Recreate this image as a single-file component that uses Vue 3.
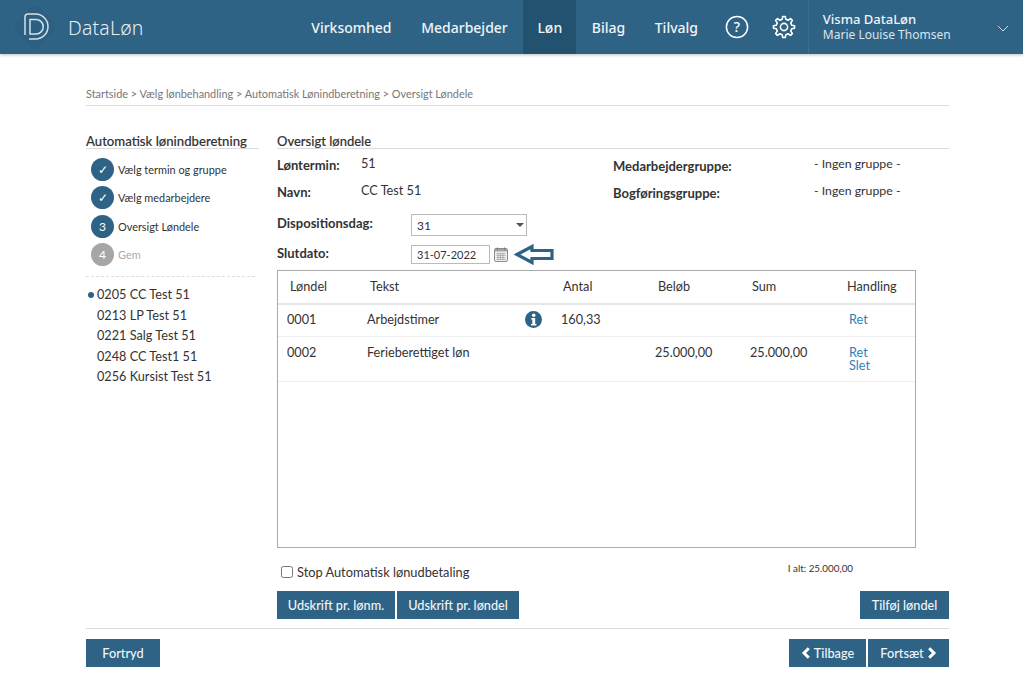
<script setup>
const nav = ['Virksomhed', 'Medarbejder', 'Løn', 'Bilag', 'Tilvalg']
const steps = [
  { mark: '✓', label: 'Vælg termin og gruppe', state: 'done' },
  { mark: '✓', label: 'Vælg medarbejdere', state: 'done' },
  { mark: '3', label: 'Oversigt Løndele', state: 'done' },
  { mark: '4', label: 'Gem', state: 'off' }
]
const employees = ['0205 CC Test 51', '0213 LP Test 51', '0221 Salg Test 51', '0248 CC Test1 51', '0256 Kursist Test 51']

// Eight-tooth cog outline for the settings icon
const gearPath = (() => {
  const pts = []
  const teeth = 8
  for (let i = 0; i < teeth; i++) {
    const a = (i / teeth) * Math.PI * 2
    const s = (Math.PI * 2) / teeth
    const add = (r, off) => {
      const t = a + off * s
      pts.push(`${(12 + r * Math.cos(t)).toFixed(2)} ${(12 + r * Math.sin(t)).toFixed(2)}`)
    }
    add(7.9, -0.3)
    add(10.6, -0.15)
    add(10.6, 0.15)
    add(7.9, 0.3)
  }
  return 'M' + pts.join('L') + 'Z'
})()
</script>

<template>
  <div class="page">
    <header class="top">
      <div class="brand">
        <svg class="logo" width="46" height="50" viewBox="0 0 46 50" fill="none">
          <path d="M20 2.5Q23 0.5 26 2.5L42.5 20Q46 25 42.5 30L26 47.5Q23 49.5 20 47.5L3.5 30Q0 25 3.5 20Z" fill="#2c5f81" stroke="#34698c" stroke-width="0.8"/>
          <path d="M13 33V15Q13 12 16 12H23.5A12.5 12.5 0 0 1 23.5 37H17" stroke="#d5e1e9" stroke-width="1.5"/>
          <path d="M18 17.5V32H24A7.25 7.25 0 0 0 24 17.5Z" stroke="#d5e1e9" stroke-width="1.5"/>
        </svg>
        <span class="brand-name">DataLøn</span>
      </div>
      <nav class="nav">
        <a v-for="item in nav" :key="item" class="nav-item" :class="{ active: item === 'Løn' }">{{ item }}</a>
      </nav>
      <svg class="help" width="24" height="24" viewBox="0 0 24 24" fill="none">
        <circle cx="12" cy="12" r="10.6" stroke="#fff" stroke-width="1.5"/>
        <text x="12" y="16.5" text-anchor="middle" class="help-mark">?</text>
      </svg>
      <svg class="gear" width="24" height="24" viewBox="0 0 24 24" fill="none" stroke="#fff" stroke-width="1.6" stroke-linejoin="round">
        <circle cx="12" cy="12" r="3.6"/>
        <path :d="gearPath"/>
      </svg>
      <div class="user">
        <div class="user-org">Visma DataLøn</div>
        <div class="user-name">Marie Louise Thomsen</div>
      </div>
      <svg class="chev" width="12" height="7" viewBox="0 0 12 7" fill="none">
        <path d="M1 1l5 5 5-5" stroke="#cfdde6" stroke-width="1"/>
      </svg>
    </header>

    <main class="content">
      <div class="crumbs">Startside &gt; Vælg lønbehandling &gt; Automatisk Lønindberetning &gt; Oversigt Løndele</div>

      <div class="columns">
        <aside class="side">
          <h2 class="side-title">Automatisk lønindberetning</h2>
          <ol class="steps">
            <li v-for="s in steps" :key="s.label" class="step" :class="s.state">
              <span class="bullet">{{ s.mark }}</span>
              <span>{{ s.label }}</span>
            </li>
          </ol>
          <ul class="emps">
            <li v-for="(e, i) in employees" :key="e" class="emp" :class="{ current: i === 0 }">{{ e }}</li>
          </ul>
        </aside>

        <section class="body">
          <h2 class="body-title">Oversigt løndele</h2>

          <div class="info">
            <div class="info-row">
              <b class="k1">Løntermin:</b><span class="v1">51</span>
              <b class="k2">Medarbejdergruppe:</b><span class="v2">- Ingen gruppe -</span>
            </div>
            <div class="info-row">
              <b class="k1">Navn:</b><span class="v1">CC Test 51</span>
              <b class="k2">Bogføringsgruppe:</b><span class="v2">- Ingen gruppe -</span>
            </div>
          </div>

          <div class="field field-select">
            <b class="k1">Dispositionsdag:</b>
            <div class="select">31<i class="caret"></i></div>
          </div>
          <div class="field field-date">
            <b class="k1">Slutdato:</b>
            <div class="date">31-07-2022</div>
            <svg class="cal" width="14" height="15" viewBox="0 0 14 15">
              <rect x="0.5" y="1.5" width="13" height="13" rx="1.5" fill="#efefef" stroke="#8c8c8c"/>
              <rect x="1" y="2" width="12" height="2.5" fill="#a3a3a3"/>
              <path d="M3.5 0.5v2.5M10.5 0.5v2.5" stroke="#777"/>
              <path d="M2.5 6.5h9M2.5 8.5h9M2.5 10.5h9M2.5 12.5h9M4 6v7M6.5 6v7M9 6v7" stroke="#a5a5a5" stroke-width="0.8"/>
            </svg>
            <svg class="arrow" width="40" height="21" viewBox="0 0 40 21" fill="none">
              <path d="M3 10.5 18 2.5V6.5H38V14.5H18V18.5Z" stroke="#2d6385" stroke-width="3.2"/>
            </svg>
          </div>

          <div class="table">
            <div class="thead">
              <span>Løndel</span><span>Tekst</span><span>Antal</span><span>Beløb</span><span>Sum</span><span>Handling</span>
            </div>
            <div class="trow">
              <span>0001</span><span>Arbejdstimer</span>
              <svg class="info-icon" width="17" height="17" viewBox="0 0 17 17">
                <circle cx="8.5" cy="8.5" r="8.5" fill="#2d6385"/>
                <circle cx="8.7" cy="4.2" r="1.8" fill="#fff"/>
                <path d="M6.2 7h4v6h1.2v1.6H6v-1.6h1.3V8.6H6.2z" fill="#fff"/>
              </svg>
              <span>160,33</span><span></span><span></span>
              <a class="link">Ret</a>
            </div>
            <div class="trow tall">
              <span>0002</span><span>Ferieberettiget løn</span><span></span><span></span>
              <span>25.000,00</span><span>25.000,00</span>
              <div class="links"><a class="link">Ret</a><a class="link">Slet</a></div>
            </div>
          </div>

          <div class="under">
            <label class="stop"><input type="checkbox" class="check" />Stop Automatisk lønudbetaling</label>
            <span class="total">I alt: 25.000,00</span>
          </div>

          <div class="actions">
            <button class="btn w118">Udskrift pr. lønm.</button>
            <button class="btn w122">Udskrift pr. løndel</button>
            <button class="btn w89 push">Tilføj løndel</button>
          </div>
        </section>
      </div>

      <div class="footer">
        <button class="btn w74">Fortryd</button>
        <button class="btn w77 push">
          <svg width="10" height="12" viewBox="0 0 10 12" fill="none"><path d="M7.8 1.2 3 6l4.8 4.8" stroke="#fff" stroke-width="3"/></svg>
          Tilbage
        </button>
        <button class="btn w81">
          Fortsæt
          <svg width="10" height="12" viewBox="0 0 10 12" fill="none"><path d="M2.2 1.2 7 6l-4.8 4.8" stroke="#fff" stroke-width="3"/></svg>
        </button>
      </div>
    </main>
  </div>
</template>

<style>
html, body { margin: 0; background: #fff; }
</style>

<style scoped>
.page { height: 680px; overflow: hidden; font-family: Lato, "Liberation Sans", sans-serif; color: #333; font-size: 13px; }
.top { height: 54px; background: #2e6386; display: flex; align-items: stretch; box-shadow: 0 1px 3px rgba(0,0,0,.25); color: #fff; }
.brand { display: flex; align-items: center; width: 296.5px; flex: none; padding-left: 12px; box-sizing: border-box; }
.logo { flex: none; }
.brand-name { margin-left: 10px; font: 300 19.4px "Noto Sans", sans-serif; color: #e8eff4; letter-spacing: .2px; }
.nav { display: flex; }
.nav-item { display: flex; align-items: center; padding: 0 14.8px; font: 500 14px "Noto Sans", sans-serif; color: #f0f4f7; }
.nav-item.active { background: #235270; padding: 0 14px; margin: 0 .8px; }
.help { align-self: center; margin-left: 12px; }
.help-mark { font: 500 14px "Noto Sans", sans-serif; fill: #fff; }
.gear { align-self: center; margin-left: 23px; margin-right: 12px; }
.user { border-left: 1px solid #3a6e8f; padding: 0 0 0 14px; display: flex; flex-direction: column; justify-content: center; width: 167px; flex: none; }
.user-org { font: 500 13px/15px "Noto Sans", sans-serif; color: #f0f4f7; }
.user-name { font: 400 12px/15px "Noto Sans", sans-serif; color: #dbe5ec; }
.chev { align-self: center; margin-left: 7px; margin-top: 3px; }

.content { margin: 0 74px 0 86px; padding-top: 33px; }
.crumbs { font-size: 10.9px; line-height: 13px; color: #777; padding-bottom: 5px; border-bottom: 1px solid #ddd; height: 13px; }

.columns { display: flex; margin-top: 28px; }
.side { width: 173px; flex: none; margin-right: 18px; }
.side-title, .body-title { margin: 0; font-size: 13px; line-height: 14px; font-weight: 500; color: #333; border-bottom: 1px solid #ddd; -webkit-text-stroke: .15px #333; }
.side-title { font-size: 13.15px; }
.steps { list-style: none; margin: 0; padding: 6.5px 0 0 5px; }
.step { display: flex; align-items: center; height: 28.3px; font-size: 10.9px; gap: 4px; color: #333; }
.step.off { color: #aaa; }
.bullet { width: 23px; height: 23px; border-radius: 50%; background: #2e6386; color: #fff; display: flex; align-items: center; justify-content: center; font-size: 12px; flex: none; }
.step.off .bullet { background: #a6a6a6; }
.emps { list-style: none; margin: 7.5px 4px 0 0; padding: 7px 0 0 11px; border-top: 1px dashed #ddd; }
.emp { font-size: 12.7px; line-height: 20.5px; position: relative; color: #333; }
.emp.current::before { content: ""; position: absolute; left: -9px; top: 8px; width: 6px; height: 6px; border-radius: 50%; background: #2e6386; }

.body { flex: 1; min-width: 0; }
.info { padding-top: 7px; }
.info-row { display: grid; grid-template-columns: 84px 252px 201px 1fr; height: 27px; align-items: start; }
.k1, .k2 { font-size: 13px; font-weight: 700; color: #333; line-height: 18px; }
.k2 { padding-top: 1px; }
.v1, .v2 { font-size: 12.7px; line-height: 15px; }
.v2 { font-size: 12.3px; }
.field { display: flex; }
.field .k1 { width: 134px; flex: none; }
.field-select { margin-top: 4px; height: 22px; }
.select { width: 116px; height: 22px; box-sizing: border-box; border: 1px solid #bbb; font-size: 12px; line-height: 21px; padding-left: 5px; position: relative; }
.caret { position: absolute; top: 8px; right: 2px; width: 0; height: 0; border: 4px solid transparent; border-top-color: #555; border-bottom: 0; }
.field-date { margin-top: 9px; height: 19px; align-items: center; }
.field-date .k1 { margin-top: -3px; }
.date { width: 79px; height: 19px; box-sizing: border-box; border: 1px solid #bbb; font-size: 11px; line-height: 18px; padding-left: 5px; }
.cal { margin-left: 4px; }
.arrow { margin-left: 6px; flex: none; }

.table { margin-top: 6px; width: 639px; height: 278px; box-sizing: border-box; border: 1px solid #aaa; }
.thead { display: grid; grid-template-columns: 80px 193px 95px 94px 95px 1fr; padding: 0 0 2px 12px; box-sizing: content-box; height: 30px; align-items: center; border-bottom: 2px solid #e6e6e6; font-size: 12.7px; }
.trow { display: grid; grid-template-columns: 80px 158px 36px 94px 95px 99px 1fr; padding: 0 0 2px 9px; height: 32px; align-items: center; border-bottom: 1px solid #eee; font-size: 12.7px; line-height: 13px; box-sizing: border-box; }
.trow.tall { height: 45px; align-items: start; padding-top: 9px; }
.links { display: flex; flex-direction: column; }
.link { color: #2f7fb8; line-height: 13px; }
.info-icon { display: block; }

.under { display: flex; justify-content: space-between; height: 43px; width: 576px; box-sizing: border-box; padding-left: 4px; align-items: flex-start; }
.stop { display: flex; align-items: center; font-size: 12.8px; margin-top: 16px; }
.check { margin: 0 4px 0 0; width: 12px; height: 12px; }
.total { font-size: 9.8px; margin-top: 14px; }
.actions { display: flex; gap: 2px; }
.btn { height: 28px; border: 0; background: #2e6386; color: #f2f6f8; font: 500 12.7px Lato, sans-serif; padding: 0; display: inline-flex; align-items: center; justify-content: center; gap: 3px; }
.w118 { width: 118px; } .w122 { width: 122px; } .w89 { width: 89px; } .w74 { width: 74px; } .w77 { width: 77px; } .w81 { width: 81px; }
.push { margin-left: auto; }
.footer { display: flex; gap: 2px; border-top: 1px solid #ddd; margin-top: 9px; padding-top: 10px; }
</style>
